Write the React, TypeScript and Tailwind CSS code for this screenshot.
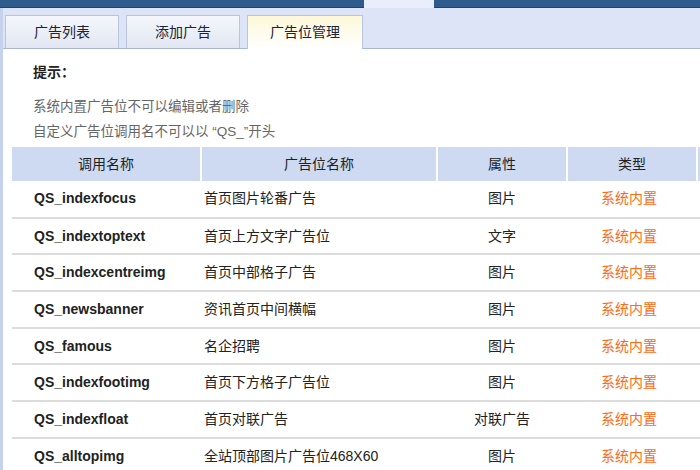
const rows = [
  ["QS_indexfocus", "首页图片轮番广告", "图片"],
  ["QS_indextoptext", "首页上方文字广告位", "文字"],
  ["QS_indexcentreimg", "首页中部格子广告", "图片"],
  ["QS_newsbanner", "资讯首页中间横幅", "图片"],
  ["QS_famous", "名企招聘", "图片"],
  ["QS_indexfootimg", "首页下方格子广告位", "图片"],
  ["QS_indexfloat", "首页对联广告", "对联广告"],
  ["QS_alltopimg", "全站顶部图片广告位468X60", "图片"],
];
const font = { fontFamily: '"Liberation Sans", "Noto Sans CJK SC", sans-serif' };
export default function App() {
  return (
    <div className="w-[700px] h-[470px] overflow-hidden bg-white text-[14px] text-[#222]" style={font}>
      <div className="flex h-[8px]">
        <div className="w-[364px] bg-[#2d5b8c] border-b border-[#1d4370]" />
        <div className="w-[70px] bg-[#e8eefa]" />
        <div className="flex-1 bg-[#2d5b8c] border-b border-[#1d4370]" />
      </div>
      <div className="border-l-[3px] border-[#c5d2ee] h-full">
        <div className="flex h-[41px] items-end bg-[#dde4f8] border-b border-[#a9b6d6] pl-[2px] gap-[7px]">
          <div className="w-[114px] h-[33px] border border-b-0 border-[#b9c4de] bg-gradient-to-b from-[#f4f6fb] to-[#e2e7f2] flex items-center justify-center text-[#223]">广告列表</div>
          <div className="w-[114px] h-[33px] border border-b-0 border-[#b9c4de] bg-gradient-to-b from-[#f4f6fb] to-[#e2e7f2] flex items-center justify-center text-[#223]">添加广告</div>
          <div className="w-[116px] h-[34px] -mb-px border border-b-0 border-[#b9c4de] bg-gradient-to-b from-[#fdf8d8] to-white flex items-center justify-center text-[#223]">广告位管理</div>
        </div>
        <div className="pl-[30px] pt-[13px] font-bold">提示：</div>
        <div className="pl-[30px] pt-[11px] text-[#666] leading-[25px] text-[13.5px]">
          <div>系统内置广告位不可以编辑或者删除</div>
          <div>自定义广告位调用名不可以以 “QS_”开头</div>
        </div>
        <table className="ml-[9px] mt-[3px] border-collapse w-[700px] table-fixed">
          <colgroup>
            <col className="w-[189px]" />
            <col className="w-[236px]" />
            <col className="w-[130px]" />
            <col className="w-[130px]" />
            <col />
          </colgroup>
          <thead>
            <tr className="h-[34px] bg-[#cddaf1]">
              {["调用名称", "广告位名称", "属性", "类型", ""].map((h, i) => (
                <th key={i} className="font-normal text-[#222] border-r-2 border-white text-center">{h}</th>
              ))}
            </tr>
          </thead>
          <tbody>
            {rows.map((r) => (
              <tr key={r[0]} className="h-[36.7px] border-b-2 border-[#dcdcdc]">
                <td className="pl-[22px] font-bold">{r[0]}</td>
                <td className="pl-[3px]">{r[1]}</td>
                <td className="text-center">{r[2]}</td>
                <td className="text-center pr-[6px] text-[#ff6a13]">系统内置</td>
                <td />
              </tr>
            ))}
          </tbody>
        </table>
      </div>
    </div>
  );
}
